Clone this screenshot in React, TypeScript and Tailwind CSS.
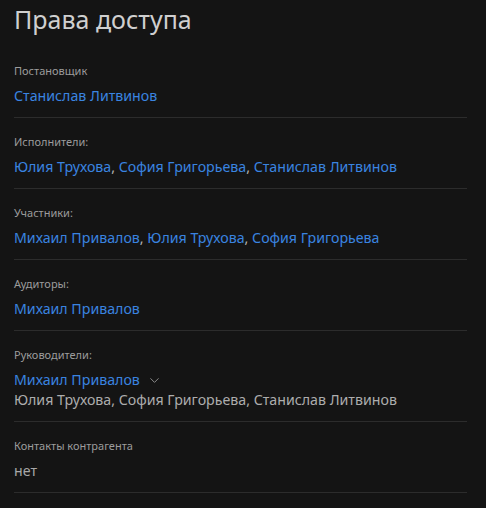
import { ChevronDown } from "lucide-react";

const font = { fontFamily: '"Noto Sans", "Open Sans", sans-serif' };

function Link({ children }: { children: React.ReactNode }) {
  return <span className="text-[#3a84e0]">{children}</span>;
}

function People({ names }: { names: string[] }) {
  return (
    <>
      {names.map((n, i) => (
        <span key={n}>
          <Link>{n}</Link>
          {i < names.length - 1 && <span className="text-[#b5b5b5]">, </span>}
        </span>
      ))}
    </>
  );
}

function Section({ label, children }: { label: string; children: React.ReactNode }) {
  return (
    <div className="border-b border-[#2c2c2c] pt-[16px] pb-[11px]">
      <div className="text-[11px] leading-4 text-[#9c9c9c]">{label}</div>
      <div className="mt-[7px] text-[14.2px] leading-5">{children}</div>
    </div>
  );
}

export default function App() {
  return (
    <div className="min-h-[508px] w-full bg-[#141414] px-[14px]" style={font}>
      <h1 className="h-[47px] pt-[1px] text-[25px] leading-[36px] text-[#cfcfcf]">Права доступа</h1>
      <div className="mr-[5px]">
        <Section label="Постановщик">
          <Link>Станислав Литвинов</Link>
        </Section>
        <Section label="Исполнители:">
          <People names={["Юлия Трухова", "София Григорьева", "Станислав Литвинов"]} />
        </Section>
        <Section label="Участники:">
          <People names={["Михаил Привалов", "Юлия Трухова", "София Григорьева"]} />
        </Section>
        <Section label="Аудиторы:">
          <Link>Михаил Привалов</Link>
        </Section>
        <Section label="Руководители:">
          <div className="flex items-center gap-[7px]">
            <Link>Михаил Привалов</Link>
            <ChevronDown size={15} strokeWidth={1.6} className="text-[#8a8a8a]" />
          </div>
          <div className="text-[#adadad]">Юлия Трухова, София Григорьева, Станислав Литвинов</div>
        </Section>
        <Section label="Контакты контрагента">
          <span className="text-[#a8a8a8]">нет</span>
        </Section>
      </div>
    </div>
  );
}
